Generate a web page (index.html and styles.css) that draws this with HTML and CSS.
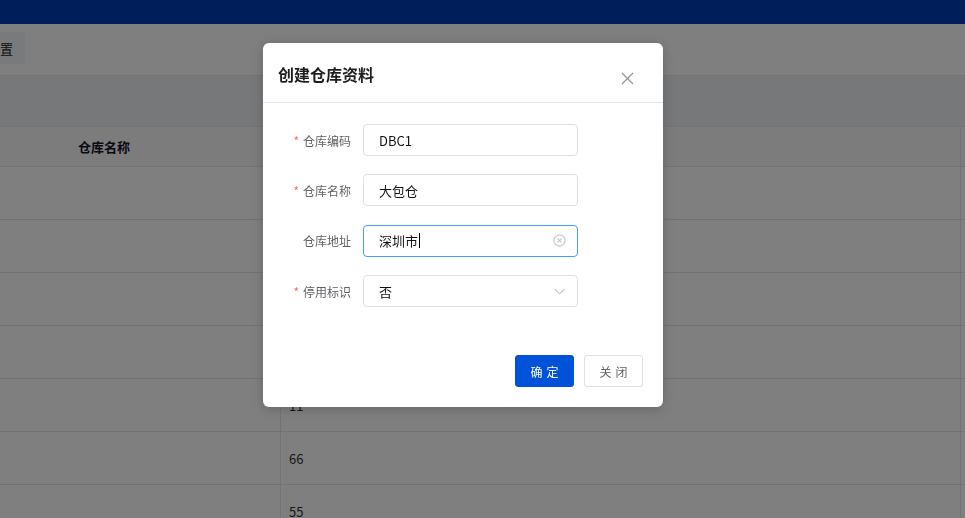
FILE: index.html
```html
<!DOCTYPE html>
<html lang="zh-CN">
<head>
    <meta charset="UTF-8">
    <meta name="viewport" content="width=device-width, initial-scale=1.0">
    <title>仓库资料</title>
    <link rel="stylesheet" href="styles.css">
</head>
<body>
    <div class="topbar"></div>

    <div class="toolbar">
        <button class="btn-reset">重置</button>
    </div>

    <div class="table-band"></div>
    <div class="table">
        <div class="row head">
            <div class="cell">仓库名称</div>
            <div class="cell"></div>
            <div class="cell"></div>
        </div>
        <div class="row"><div class="cell"></div><div class="cell">44</div><div class="cell"></div></div>
        <div class="row"><div class="cell"></div><div class="cell">33</div><div class="cell"></div></div>
        <div class="row"><div class="cell"></div><div class="cell">22</div><div class="cell"></div></div>
        <div class="row"><div class="cell"></div><div class="cell">12</div><div class="cell"></div></div>
        <div class="row"><div class="cell"></div><div class="cell">11</div><div class="cell"></div></div>
        <div class="row"><div class="cell"></div><div class="cell">66</div><div class="cell"></div></div>
        <div class="row"><div class="cell"></div><div class="cell">55</div><div class="cell"></div></div>
    </div>

    <!-- modal -->
    <div class="mask"></div>
    <div class="dialog">
        <div class="dialog-header">
            <span class="dialog-title">创建仓库资料</span>
            <svg class="dialog-close" width="13" height="13" viewBox="0 0 13 13">
                <path d="M1 1 L12 12 M12 1 L1 12" stroke="#909399" stroke-width="1.2" fill="none"/>
            </svg>
        </div>

        <div class="dialog-body">
            <div class="form-item">
                <label class="form-label"><span class="req">*</span>仓库编码</label>
                <div class="input"><span class="input-text">DBC1</span></div>
            </div>
            <div class="form-item">
                <label class="form-label"><span class="req">*</span>仓库名称</label>
                <div class="input"><span class="input-text">大包仓</span></div>
            </div>
            <div class="form-item">
                <label class="form-label">仓库地址</label>
                <div class="input is-focus">
                    <span class="input-text">深圳市</span><span class="caret"></span>
                    <svg class="suffix" width="13" height="13" viewBox="0 0 13 13">
                        <circle cx="6.5" cy="6.5" r="5.6" stroke="#c0c4cc" stroke-width="1.1" fill="none"/>
                        <path d="M4.6 4.6 L8.4 8.4 M8.4 4.6 L4.6 8.4" stroke="#c0c4cc" stroke-width="1.1"/>
                    </svg>
                </div>
            </div>
            <div class="form-item">
                <label class="form-label"><span class="req">*</span>停用标识</label>
                <div class="input select">
                    <span class="input-text">否</span>
                    <svg class="suffix" width="11" height="7" viewBox="0 0 11 7">
                        <path d="M0.5 0.8 L5.5 5.8 L10.5 0.8" stroke="#c0c4cc" stroke-width="1.1" fill="none"/>
                    </svg>
                </div>
            </div>
        </div>

        <div class="dialog-footer">
            <button class="btn btn-primary">确定</button>
            <button class="btn">关闭</button>
        </div>
    </div>
</body>
</html>
```

FILE: styles.css
```css
body {
    margin: 0;
    height: 518px;
    overflow: hidden;
    font-family: "Noto Sans CJK SC", "Liberation Sans", sans-serif;
    background: #fff;
    color: #333;
}

.topbar {
    height: 24px;
    background: #003cb4;
}

.toolbar {
    height: 32px;
    padding: 8px 0 11px;
    overflow: hidden;
}

.btn-reset {
    margin-left: -25px;
    height: 32px;
    padding: 0 12px;
    border: 0;
    border-radius: 4px;
    background: #f3f4f6;
    font-family: inherit;
    font-size: 13px;
    color: #222;
}

/* table */
.table-band {
    height: 50px;
    border-top: 1px solid #e6e8ec;
    border-bottom: 1px solid #e6e8ec;
    background: #eef0f4;
}

.row {
    display: grid;
    grid-template-columns: 281px 680px 1fr;
    height: 53px;
    border-bottom: 1px solid #e4e7ed;
    box-sizing: border-box;
}

.row.head {
    height: 40px;
    background: #f8f9fb;
}

.cell {
    display: flex;
    align-items: center;
    padding-left: 8px;
    border-right: 1px solid #e4e7ed;
    font-size: 13px;
    color: #333;
}

.row.head .cell {
    font-weight: bold;
    color: #141428;
}

.row.head .cell:first-child {
    padding-left: 78px;
}

/* modal */
.mask {
    position: fixed;
    inset: 0;
    background: rgba(0, 0, 0, 0.5);
}

.dialog {
    position: absolute;
    left: 263px;
    top: 43px;
    width: 400px;
    background: #fff;
    border-radius: 6px;
    box-shadow: 0 2px 12px rgba(0, 0, 0, 0.2);
}

.dialog-header {
    display: flex;
    justify-content: space-between;
    align-items: flex-start;
    padding: 19px 29px 16px 15px;
    border-bottom: 1px solid #e4e7ed;
}

.dialog-title {
    font-size: 16px;
    line-height: 24px;
    font-weight: bold;
    color: #1d1d1f;
}

.dialog-close {
    margin-top: 10px;
}

.dialog-body {
    padding: 21px 0 28px;
}

.form-item {
    display: flex;
    align-items: center;
    margin-bottom: 18.4px;
}

.form-item:last-child {
    margin-bottom: 0;
}

.form-label {
    width: 100px;
    box-sizing: border-box;
    padding-right: 12px;
    text-align: right;
    font-size: 12px;
    color: #606266;
}

.req {
    color: #f56c6c;
    margin-right: 4px;
}

.input {
    display: flex;
    align-items: center;
    width: 215px;
    height: 32px;
    box-sizing: border-box;
    padding: 0 11px 0 15px;
    border: 1px solid #dcdfe6;
    border-radius: 4px;
    font-size: 13px;
    color: #111;
}

.input.is-focus {
    border-color: #409eff;
}

.caret {
    width: 1px;
    height: 15px;
    margin-left: 1px;
    background: #000;
}

.suffix {
    margin-left: auto;
}

.input.select .suffix {
    margin-right: 1px;
}

.dialog-footer {
    display: flex;
    justify-content: flex-end;
    gap: 10px;
    padding: 20px;
}

.btn {
    width: 59px;
    height: 32px;
    border: 1px solid #dcdfe6;
    border-radius: 3px;
    background: #fff;
    font-family: inherit;
    font-size: 12px;
    letter-spacing: 0.34em;
    text-indent: 0.34em;
    color: #606266;
}

.btn-primary {
    background: #0052d9;
    border-color: #0052d9;
    color: #fff;
}
```
